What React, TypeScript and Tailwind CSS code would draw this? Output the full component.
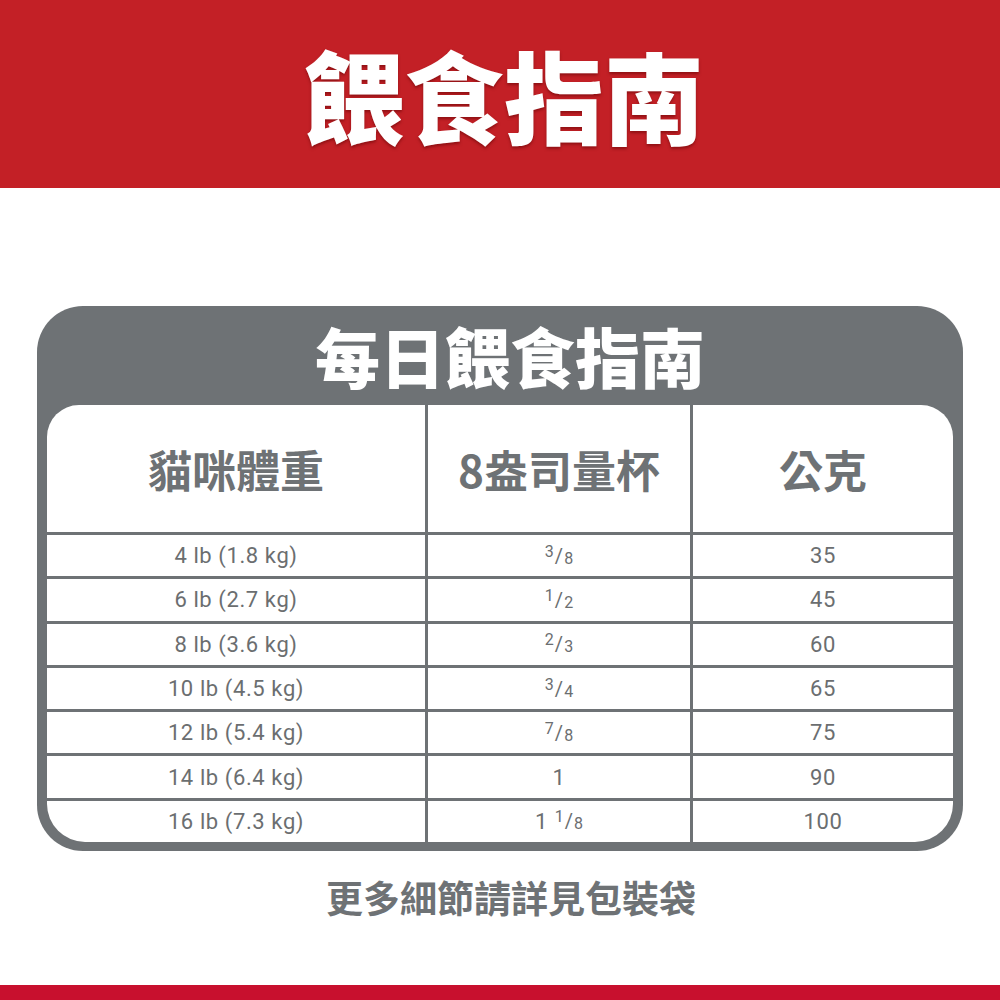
const rows: { weight: string; cup: [string, string, string]; grams: string }[] = [
  { weight: '4 lb (1.8 kg)', cup: ['', '3', '8'], grams: '35' },
  { weight: '6 lb (2.7 kg)', cup: ['', '1', '2'], grams: '45' },
  { weight: '8 lb (3.6 kg)', cup: ['', '2', '3'], grams: '60' },
  { weight: '10 lb (4.5 kg)', cup: ['', '3', '4'], grams: '65' },
  { weight: '12 lb (5.4 kg)', cup: ['', '7', '8'], grams: '75' },
  { weight: '14 lb (6.4 kg)', cup: ['1', '', ''], grams: '90' },
  { weight: '16 lb (7.3 kg)', cup: ['1', '1', '8'], grams: '100' },
];

const cjk = { fontFamily: '"Noto Sans CJK TC", "Noto Sans", sans-serif' };
const latin = { fontFamily: 'Roboto, "Liberation Sans", sans-serif' };

function Cup({ cup }: { cup: [string, string, string] }) {
  const [whole, num, den] = cup;
  return (
    <span className="inline-flex items-center">
      {whole && <span className="text-[22px]">{whole}</span>}
      {whole && num && <span className="w-[7px]" />}
      {num && (
        <span className="inline-flex items-center text-[16px] leading-none tracking-normal">
          <span className="relative -top-[4px]">{num}</span>
          <span className="text-[20px] mx-[1px]">/</span>
          <span className="relative top-[3px]">{den}</span>
        </span>
      )}
    </span>
  );
}

export default function App() {
  return (
    <div className="w-[1000px] h-[1000px] bg-white flex flex-col overflow-hidden">
      {/* Red banner */}
      <div className="h-[188px] bg-[#c32026] flex items-center justify-center pl-[8px]">
        <h1
          className="text-white text-[100px] font-black leading-none [text-shadow:0_2px_3px_rgba(90,0,0,0.5)]"
          style={cjk}
        >
          餵食指南
        </h1>
      </div>

      {/* Feeding card */}
      <div className="mt-[118px] mx-[37px] rounded-[46px] bg-[#6e7275] px-[10px] pb-[9px]">
        <div className="h-[99px] flex items-center justify-center pl-[20px]">
          <h2 className="text-white text-[65px] font-black leading-none" style={cjk}>
            每日餵食指南
          </h2>
        </div>
        <div className="bg-white rounded-t-[32px] rounded-b-[38px] overflow-hidden">
          <div className="grid grid-cols-[378px_265px_1fr] h-[127px] text-[#6e7275] text-[44px] font-bold" style={cjk}>
            <div className="flex items-center justify-center">貓咪體重</div>
            <div className="flex items-center justify-center border-l-[3px] border-[#6e7275]">8盎司量杯</div>
            <div className="flex items-center justify-center border-l-[3px] border-[#6e7275]">公克</div>
          </div>
          {rows.map((r) => (
            <div
              key={r.weight}
              className="grid grid-cols-[378px_265px_1fr] h-[44.3px] border-t-[3px] border-[#6e7275] text-[#6b6e70] text-[22px] tracking-[0.6px]"
              style={latin}
            >
              <div className="flex items-center justify-center">{r.weight}</div>
              <div className="flex items-center justify-center border-l-[3px] border-[#6e7275]">
                <Cup cup={r.cup} />
              </div>
              <div className="flex items-center justify-center border-l-[3px] border-[#6e7275]">{r.grams}</div>
            </div>
          ))}
        </div>
      </div>

      <p className="mt-[28px] pl-[22px] text-center text-[#6e7275] text-[37px] font-bold leading-none" style={cjk}>
        更多細節請詳見包裝袋
      </p>

      <div className="mt-auto h-[15px] bg-[#c8102e]" />
    </div>
  );
}
